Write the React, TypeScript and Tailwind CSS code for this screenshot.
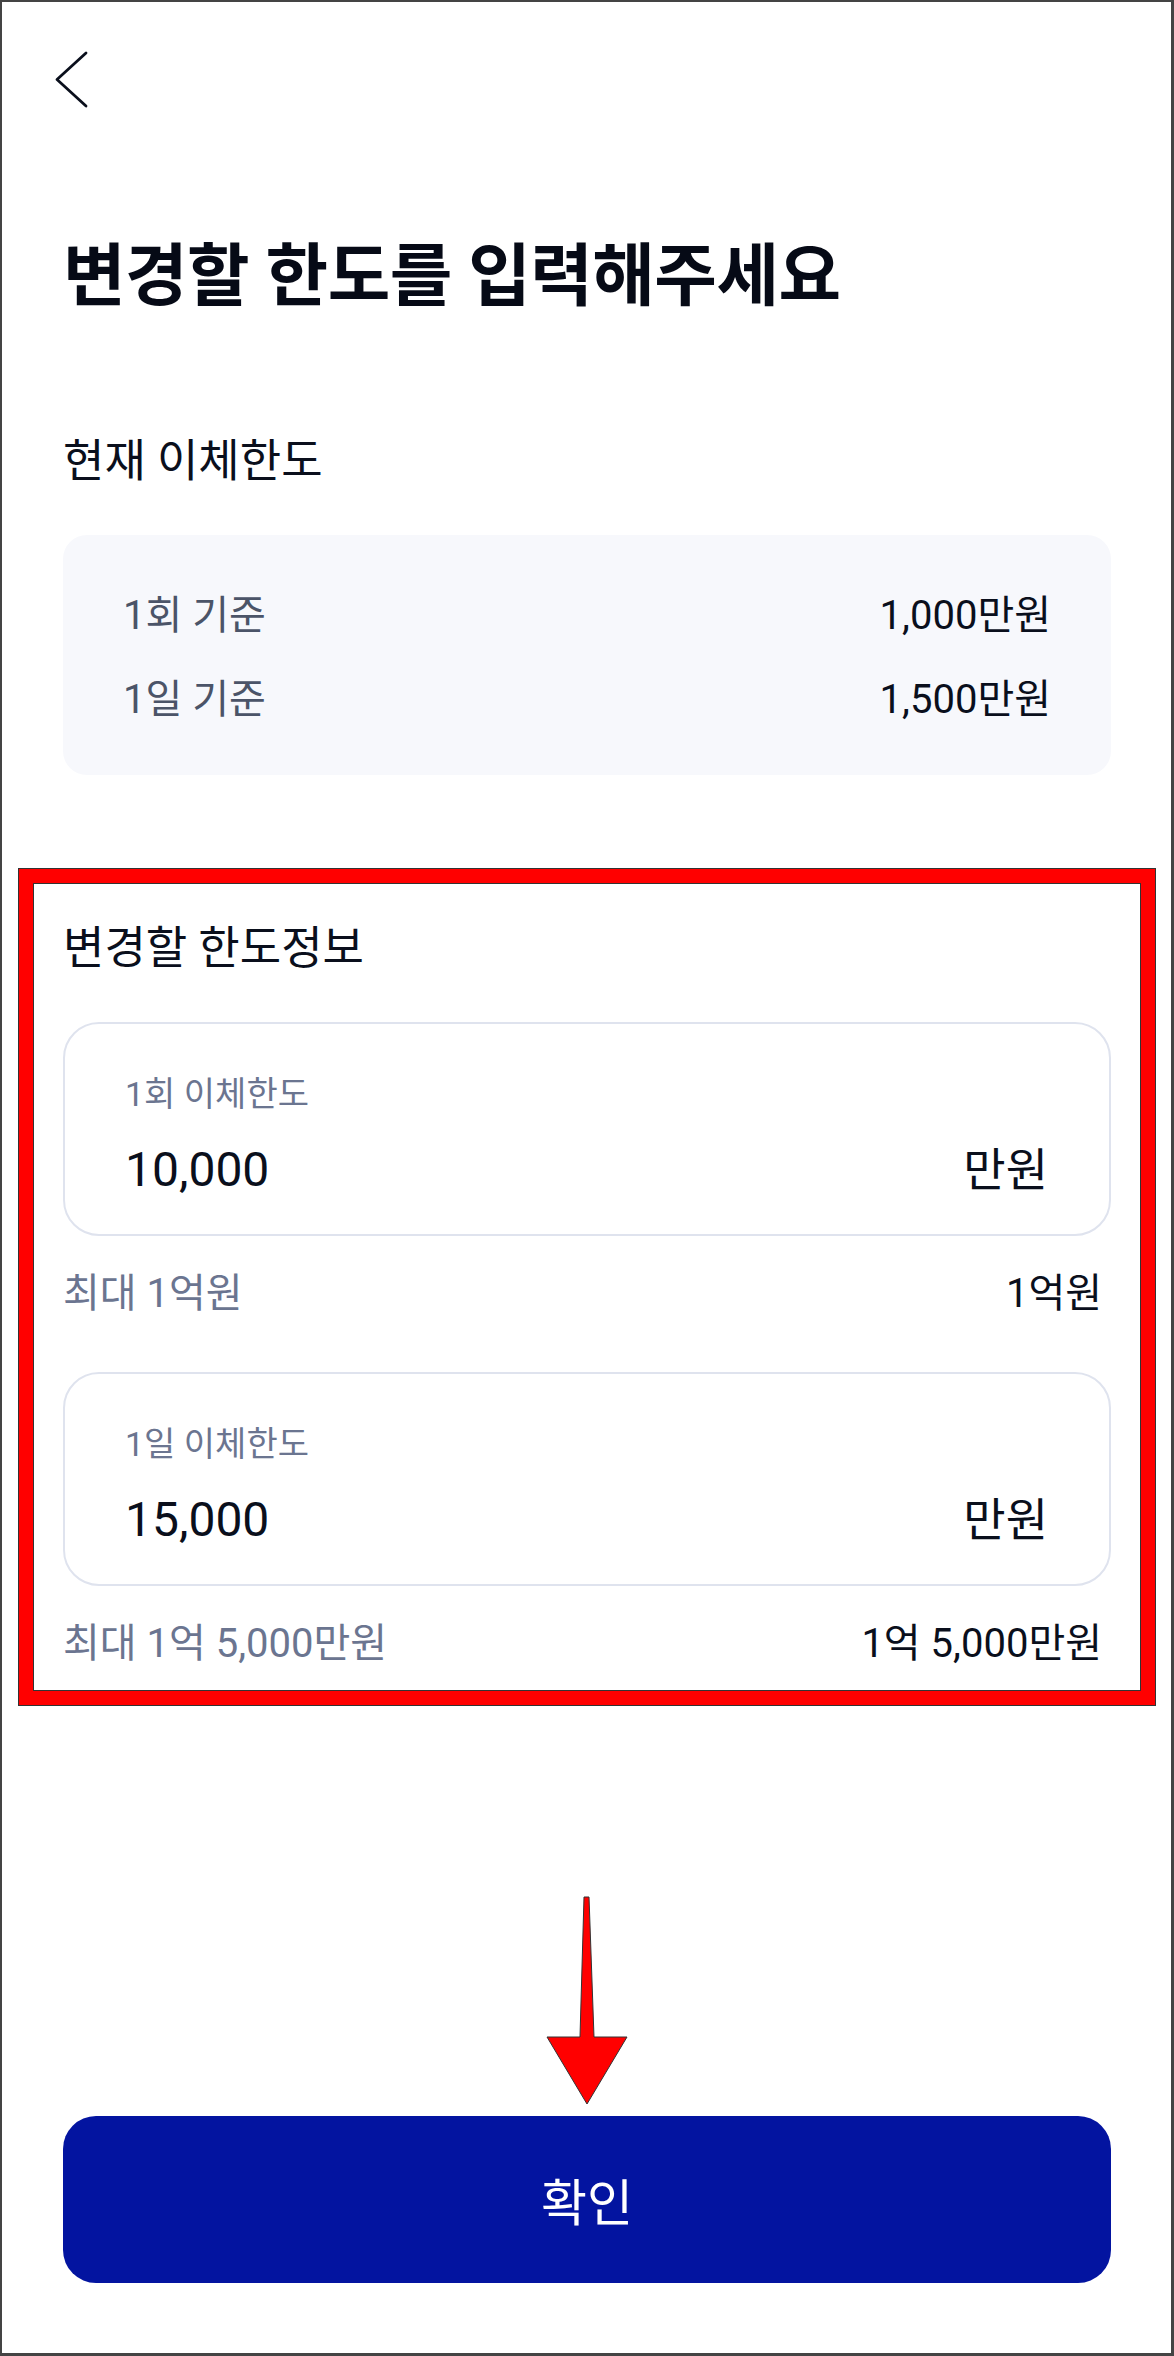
import React from 'react';

const limits = [
  { label: '1회 기준', value: '1,000만원' },
  { label: '1일 기준', value: '1,500만원' },
];

const fields = [
  { label: '1회 이체한도', amount: '10,000', maxLabel: '최대 1억원', maxValue: '1억원' },
  { label: '1일 이체한도', amount: '15,000', maxLabel: '최대 1억 5,000만원', maxValue: '1억 5,000만원' },
];

const LimitField: React.FC<{ label: string; amount: string; maxLabel: string; maxValue: string; first?: boolean }> = ({
  label,
  amount,
  maxLabel,
  maxValue,
  first,
}) => (
  <div className={first ? 'mt-[41px]' : 'mt-[52px]'}>
    {/* Input box */}
    <div className="h-[214px] rounded-[36px] border-2 border-[#dfe3ee] bg-white pl-[60px] pr-[61px] pt-[48px]">
      <p className="text-[34px] leading-[44px] text-[#6b7590]">{label}</p>
      <div className="mt-[22px] flex items-center justify-between">
        <span className="text-[48px] leading-[64px] text-[#0a0f1c]">{amount}</span>
        <span className="text-[46px] leading-[64px] text-[#0a0f1c]">만원</span>
      </div>
    </div>
    {/* Max hint */}
    <div className="mt-[32px] flex items-center justify-between pr-[9px] text-[40px] leading-[52px]">
      <span className="text-[#6b7590]">{maxLabel}</span>
      <span className="text-[#0a0f1c]">{maxValue}</span>
    </div>
  </div>
);

const App: React.FC = () => {
  return (
    <div className="relative flex h-[2356px] w-[1174px] flex-col overflow-hidden border-b-[3px] border-l-2 border-r-[3px] border-t-2 border-[#444444] bg-white pb-[70px] pl-[61px] pr-[60px] pt-[48px] font-['Roboto','Noto_Sans_CJK_KR','Noto_Sans',sans-serif]">
      {/* Header */}
      <button className="-ml-[9px] h-[60px] w-[36px]">
        <svg width="36" height="60" viewBox="0 0 36 60" fill="none">
          <path d="M32 3 L3 29.5 L32 56" stroke="#0a0f1c" strokeWidth="2.8" strokeLinecap="round" strokeLinejoin="round" />
        </svg>
      </button>

      <h1 className="mt-[123px] text-[68px] font-bold leading-[88px] tracking-[-0.5px] text-[#060a16]">
        변경할 한도를 입력해주세요
      </h1>

      {/* Current limit */}
      <h2 className="mt-[109px] text-[45px] leading-[64px] text-[#0a0f1c]">현재 이체한도</h2>
      <div className="mt-[41px] flex h-[240px] flex-col gap-[28px] rounded-[24px] bg-[#f7f8fc] pb-[47px] pl-[60px] pr-[60px] pt-[53px]">
        {limits.map((row) => (
          <div key={row.label} className="flex items-center justify-between text-[40px] leading-[56px]">
            <span className="text-[#4b5468]">{row.label}</span>
            <span className="text-[#0a0f1c]">{row.value}</span>
          </div>
        ))}
      </div>

      {/* New limit */}
      <h2 className="mt-[142px] text-[45px] leading-[64px] text-[#0a0f1c]">변경할 한도정보</h2>
      {fields.map((f, i) => (
        <LimitField key={f.label} {...f} first={i === 0} />
      ))}

      {/* Confirm */}
      <button className="mt-auto flex h-[167px] w-full items-center justify-center rounded-[33px] bg-[#0314a0] pt-[9px] text-[50px] text-white">
        확인
      </button>

      {/* Annotation box */}
      <div className="pointer-events-none absolute left-[17px] top-[867px] h-[836px] w-[1136px] border-[14px] border-[#ff0000] shadow-[inset_0_0_0_1px_#333333] outline outline-1 outline-[#333333]" />

      {/* Annotation arrow */}
      <svg className="pointer-events-none absolute left-[538px] top-[1888px]" width="95" height="220" viewBox="0 0 95 220">
        <polygon points="44,7 49,7 54,147 87,147 47,214 7,147 40,147" fill="#ff0000" stroke="#333333" strokeWidth="1" />
      </svg>
    </div>
  );
};

export default App;
